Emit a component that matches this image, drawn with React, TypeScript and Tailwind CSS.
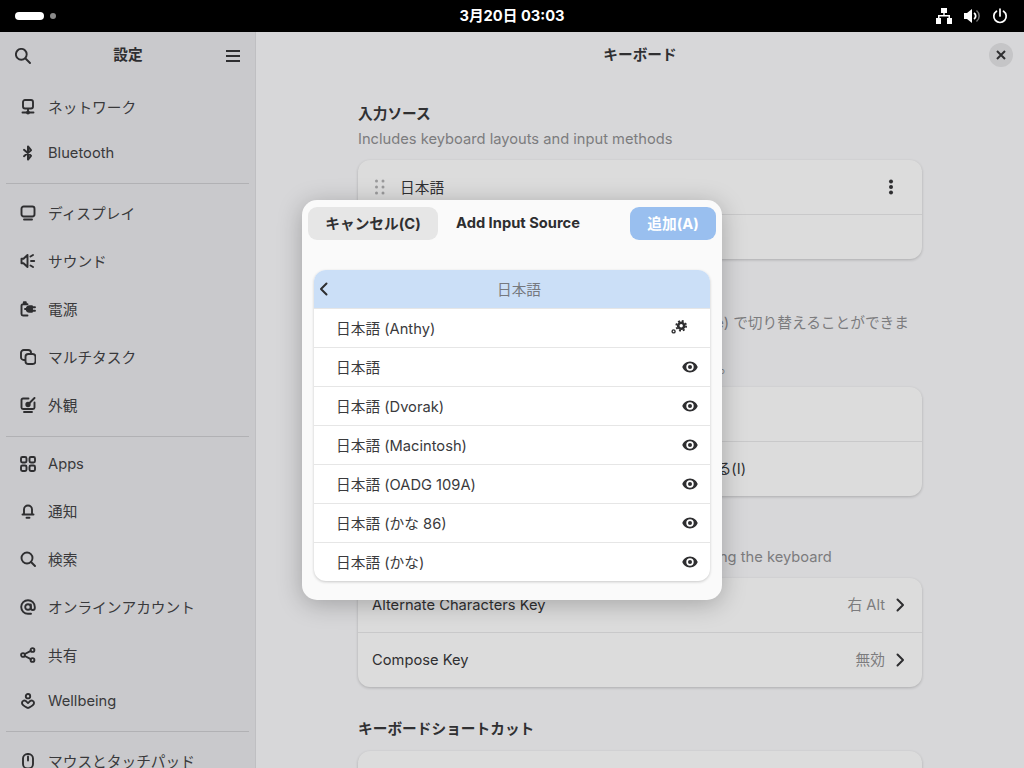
import { ReactNode } from 'react';

const FONT = { fontFamily: 'Inter, "Noto Sans CJK JP", sans-serif' };

function Ico({ children, size = 16, className = '' }: { children: ReactNode; size?: number; className?: string }) {
    return (
        <svg width={size} height={size} viewBox="0 0 16 16" fill="none" stroke="currentColor" strokeWidth="1.9" strokeLinecap="round" strokeLinejoin="round" className={className}>
            {children}
        </svg>
    );
}

const icons: Record<string, ReactNode> = {
    network: <><rect x="3" y="1" width="10" height="8.5" rx="2" /><path d="M8 10v4M2.5 13.5h11" /><circle cx="8" cy="13.5" r="1" fill="currentColor" /></>,
    bluetooth: <path d="M4 4.8 11 10.8 8 14.5V1.5l3 3.7-7 6" strokeWidth="2" />,
    display: <><rect x="1.5" y="1.5" width="13" height="10" rx="2.2" /><path d="M4 14.5h8" /></>,
    sound: <><path d="M1.5 5.8h2L7.5 2v12L3.5 10.2h-2z" /><path d="M10.5 3.5l2.5-1.5M11 8h3.2M10.5 12.5l2.5 1.5" /></>,
    power: <><path d="M7.5 3.2H3A1.5 1.5 0 0 0 1.5 4.7v8.3A1.5 1.5 0 0 0 3 14.5h4.5M3.8 3V1.2h2V3" /><path d="M9.5 5.2H12v5.6H9.5a2.8 2.8 0 0 1 0-5.6z" fill="currentColor" /><path d="M12 6.3h3M12 9.7h3M5 8h1.5" /></>,
    multitask: <><rect x="1" y="1" width="10" height="10" rx="2.8" /><rect x="5.5" y="5" width="10" height="10" rx="2.8" fill="#c9c9cc" /></>,
    appearance: <><path d="M8.5 1.5H3A1.5 1.5 0 0 0 1.5 3v7.5A1.5 1.5 0 0 0 3 12h10a1.5 1.5 0 0 0 1.5-1.5V5.5" /><path d="M4 15h8" /><path d="M14.5 1 9.5 6" /><circle cx="8" cy="7.5" r="1.7" fill="currentColor" /></>,
    apps: <><rect x="1" y="1" width="5.5" height="5.5" rx="1.4" /><rect x="9.5" y="1" width="5.5" height="5.5" rx="1.4" /><rect x="1" y="9.5" width="5.5" height="5.5" rx="1.4" /><rect x="9.5" y="9.5" width="5.5" height="5.5" rx="1.4" /></>,
    bell: <><path d="M4 11V6.5a4 4 0 0 1 8 0V11" /><path d="M2.5 11.5h11" /><path d="M6.5 14.8h3" /></>,
    search: <><circle cx="7" cy="7" r="5.5" /><path d="M11 11l4 4" /></>,
    at: <><circle cx="8" cy="8" r="2.8" /><path d="M10.8 5.5V9a2 2 0 0 0 4 0V8A6.8 6.8 0 1 0 8 14.8h3" /></>,
    share: <><circle cx="12.5" cy="3" r="1.9" /><circle cx="3" cy="8" r="1.9" /><circle cx="12.5" cy="13" r="1.9" /><path d="M4.8 7 10.8 3.9M4.8 9l6 3.1" /></>,
    wellbeing: <><circle cx="8" cy="3.2" r="2.2" /><path d="M8 15c-2-1-6-2.4-6-5a2.4 2.4 0 0 1 4.4-1.4L8 10l1.6-1.4A2.4 2.4 0 0 1 14 10c0 2.6-4 4-6 5z" /></>,
    mouse: <><rect x="3" y="1" width="10" height="14.5" rx="4.5" /><path d="M8 3.5v4" /></>,
};

type Item = { icon: string; label: string; h: string; latin?: boolean };

const groups: { cls: string; items: Item[] }[] = [
    {
        cls: '',
        items: [
            { icon: 'network', label: 'ネットワーク', h: 'h-[48px]' },
            { icon: 'bluetooth', label: 'Bluetooth', h: 'h-[44px]', latin: true },
        ],
    },
    {
        cls: 'border-t border-[#b1b1b4] mx-[6px] mt-[7px] pt-[6px]',
        items: [
            { icon: 'display', label: 'ディスプレイ', h: 'h-[48px]' },
            { icon: 'sound', label: 'サウンド', h: 'h-[48px]' },
            { icon: 'power', label: '電源', h: 'h-[48px]' },
            { icon: 'multitask', label: 'マルチタスク', h: 'h-[48px]' },
            { icon: 'appearance', label: '外観', h: 'h-[48px]' },
        ],
    },
    {
        cls: 'border-t border-[#b1b1b4] mx-[6px] mt-[6px] pt-[5px]',
        items: [
            { icon: 'apps', label: 'Apps', h: 'h-[46px]', latin: true },
            { icon: 'bell', label: '通知', h: 'h-[48px]' },
            { icon: 'search', label: '検索', h: 'h-[48px]' },
            { icon: 'at', label: 'オンラインアカウント', h: 'h-[48px]' },
            { icon: 'share', label: '共有', h: 'h-[48px]' },
            { icon: 'wellbeing', label: 'Wellbeing', h: 'h-[44px]', latin: true },
        ],
    },
    {
        cls: 'border-t border-[#b1b1b4] mx-[6px] mt-[7px] pt-[6px]',
        items: [{ icon: 'mouse', label: 'マウスとタッチパッド', h: 'h-[48px]' }],
    },
];

const sources = ['日本語 (Anthy)', '日本語', '日本語 (Dvorak)', '日本語 (Macintosh)', '日本語 (OADG 109A)', '日本語 (かな 86)', '日本語 (かな)'];

function Chevron() {
    return (
        <Ico className="text-[#2e2e30] ml-[7px]">
            <path d="M5.5 2.5 11 8l-5.5 5.5" strokeWidth="2" />
        </Ico>
    );
}

function Sidebar() {
    return (
        <div className="w-[256px] shrink-0 bg-[#c9c9cc] border-r border-[#bfbfc2] flex flex-col overflow-hidden text-[#39393b]">
            <div className="h-[47px] shrink-0 flex items-center justify-between pl-[15px] pr-[14px] text-[#2e2e30]">
                <Ico><circle cx="6.3" cy="6.3" r="5.4" /><path d="M10.5 10.5l4.5 4.5" /></Ico>
                <span className="font-bold text-[14.7px]">設定</span>
                <svg width="16" height="16" viewBox="0 0 16 16" className="fill-current">
                    <rect x="1" y="2" width="14" height="2" /><rect x="1" y="7" width="14" height="2" /><rect x="1" y="12" width="14" height="2" />
                </svg>
            </div>
            <div className="pt-[5px]">
                {groups.map((group, i) => (
                    <div key={i} className={group.cls}>
                        {group.items.map(item => (
                            <div key={item.label} className={`${item.h} flex items-center text-[14.7px] ${i > 0 ? 'pl-[14px]' : 'pl-[20px]'}`}>
                                <Ico className="text-[#2e2e30] -mt-[2px]">{icons[item.icon]}</Ico>
                                <span className={`ml-[12px] whitespace-nowrap ${item.latin ? '-mt-[2px]' : ''}`}>{item.label}</span>
                            </div>
                        ))}
                    </div>
                ))}
            </div>
        </div>
    );
}

function Keyboard() {
    return (
        <div className="flex-1 relative bg-[#d7d7d9] overflow-hidden text-[#303032]">
            <div className="h-[47px] flex items-center justify-center relative">
                <span className="font-bold text-[14.7px]">キーボード</span>
                <div className="absolute right-[11px] top-[11px] w-[24px] h-[24px] rounded-full bg-[#c5c5c7] flex items-center justify-center">
                    <svg width="10" height="10" viewBox="0 0 10 10" stroke="#2e2e30" strokeWidth="2"><path d="M1 1l8 8M9 1 1 9" /></svg>
                </div>
            </div>

            <div className="w-[564px] ml-[102px] text-[14.7px]">
                <h2 className="font-bold mt-[24px] leading-[22px]">入力ソース</h2>
                <p className="text-[#7c7c7e] leading-[22px] mt-[3px] whitespace-nowrap">Includes keyboard layouts and input methods</p>
                <div className="mt-[10px] rounded-[12px] bg-[#dcdcdc] shadow-[0_1px_3px_rgba(0,0,0,0.2)] overflow-hidden">
                    <div className="h-[55px] flex items-center border-b border-[#c9c9ca] pl-[16px] pr-[23px]">
                        <svg width="12" height="16" viewBox="0 0 12 16" className="fill-[#9a9a9b]">
                            <circle cx="2.5" cy="2" r="1.5" /><circle cx="9" cy="2" r="1.5" /><circle cx="2.5" cy="8" r="1.5" /><circle cx="9" cy="8" r="1.5" /><circle cx="2.5" cy="14" r="1.5" /><circle cx="9" cy="14" r="1.5" />
                        </svg>
                        <span className="ml-[14px] mt-[3px]">日本語</span>
                        <svg width="16" height="16" viewBox="0 0 16 16" className="ml-auto fill-[#2e2e30]">
                            <circle cx="8" cy="2.5" r="2" /><circle cx="8" cy="8" r="2" /><circle cx="8" cy="13.5" r="2" />
                        </svg>
                    </div>
                    <div className="h-[44px]" />
                </div>

                <h2 className="font-bold mt-[27px] leading-[22px]">入力ソースの切り替え</h2>
                <div className="text-[#7c7c7e] leading-[22px] mt-[4px]">
                    <p className="text-right pr-[13px] whitespace-nowrap">(または Shift+Space) で切り替えることができま</p>
                    <p className="h-[22px]" />
                    <p className="pl-[348px]">す。</p>
                </div>
                <div className="mt-[9px] rounded-[12px] bg-[#dcdcdc] shadow-[0_1px_3px_rgba(0,0,0,0.2)] overflow-hidden">
                    <div className="h-[55px] border-b border-[#c9c9ca]" />
                    <div className="h-[54px] flex items-center justify-end pr-[176px] whitespace-nowrap">各ウィンドウごとに異なる入力ソースに切り替える(I)</div>
                </div>

                <h2 className="font-bold mt-[25px] leading-[22px]">特殊文字の入力</h2>
                <p className="text-[#7c7c7e] leading-[22px] mt-[3px] whitespace-nowrap">Methods for entering symbols and letter variants using the keyboard</p>
                <div className="mt-[10px] rounded-[12px] bg-[#dcdcdc] shadow-[0_1px_3px_rgba(0,0,0,0.2)] overflow-hidden">
                    <div className="h-[55px] flex items-center border-b border-[#c9c9ca] pl-[14px] pr-[14px]">
                        <span className="mt-[1px]">Alternate Characters Key</span>
                        <span className="ml-auto mt-[1px] text-[#7c7c7e]">右 Alt</span>
                        <Chevron />
                    </div>
                    <div className="h-[54px] flex items-center pl-[14px] pr-[14px]">
                        <span className="mt-[1px]">Compose Key</span>
                        <span className="ml-auto mt-[1px] text-[#7c7c7e]">無効</span>
                        <Chevron />
                    </div>
                </div>

                <h2 className="font-bold mt-[31px] leading-[22px]">キーボードショートカット</h2>
                <div className="mt-[11px] h-[54px] rounded-[12px] bg-[#dcdcdc] shadow-[0_1px_3px_rgba(0,0,0,0.2)]" />
            </div>

            <div className="absolute left-[46px] top-[168px] w-[420px] h-[400px] rounded-[15px] bg-[#fafafa] shadow-[0_4px_24px_rgba(0,0,0,0.25)] p-[6px] pt-[7px]">
                <div className="flex items-center h-[33px] font-bold text-[14.7px]">
                    <div className="w-[130px] h-[33px] rounded-[9px] bg-[#e6e6e6] flex items-center justify-center text-[#303032]">
                        <span className="mt-[2px]">キャンセル(C)</span>
                    </div>
                    <span className="ml-[18px] text-[#2e2e30]">Add Input Source</span>
                    <div className="ml-auto w-[86px] h-[33px] rounded-[9px] bg-[#99bfef] flex items-center justify-center text-white">
                        <span className="mt-[2px]">追加(A)</span>
                    </div>
                </div>
                <div className="mt-[30px] mx-[6px] w-[396px] rounded-[12px] bg-white shadow-[0_1px_3px_rgba(0,0,0,0.2)] overflow-hidden text-[14.7px] text-[#3a3a3c]">
                    <div className="h-[38px] bg-[#cbdff7] relative flex items-center justify-center text-[#76797f]">
                        <Ico className="absolute left-[2px] text-[#2e2e30]"><path d="M10.5 2.5 5 8l5.5 5.5" strokeWidth="2" /></Ico>
                        <span className="ml-[14px] mt-[2px]">日本語</span>
                    </div>
                    {sources.map((name, i) => (
                        <div key={name} className="h-[39px] border-t border-[#e6e6e6] flex items-center pl-[22px] pr-[12px]">
                            <span className="mt-[2px]">{name}</span>
                            {i === 0 ? (
                                <svg width="16" height="16" viewBox="0 0 16 16" className="ml-auto mr-[11px] -mt-[2px] text-[#2e2e30]" fill="none" stroke="currentColor">
                                    <circle cx="10.2" cy="6.8" r="3" strokeWidth="2.6" />
                                    <circle cx="10.2" cy="6.8" r="4.9" strokeWidth="1.8" strokeDasharray="2 1.85" />
                                    <circle cx="2.6" cy="12.4" r="1.5" strokeWidth="1.4" />
                                </svg>
                            ) : (
                                <svg width="16" height="16" viewBox="0 0 16 16" className="ml-auto text-[#2e2e30]" fill="currentColor">
                                    <path fillRule="evenodd" d="M8 2.5C4.2 2.5 1.2 5.3 0.3 8c.9 2.7 3.9 5.5 7.7 5.5s6.8-2.8 7.7-5.5C14.8 5.3 11.8 2.5 8 2.5zM8 4.3A3.7 3.7 0 1 1 8 11.7 3.7 3.7 0 0 1 8 4.3z" />
                                    <circle cx="8" cy="8" r="2" />
                                </svg>
                            )}
                        </div>
                    ))}
                </div>
            </div>
        </div>
    );
}

export default function App() {
    return (
        <div className="w-[1024px] h-[768px] overflow-hidden flex flex-col" style={FONT}>
            <div className="h-[32px] shrink-0 bg-black flex items-center relative text-white">
                <div className="w-[29px] h-[8px] rounded-full bg-white ml-[15px]" />
                <div className="w-[6px] h-[6px] rounded-full bg-[#8a8a8a] ml-[6px]" />
                <span className="absolute left-0 right-0 text-center font-bold text-[14.7px] leading-[32px]">3月20日 03:03</span>
                <div className="ml-auto flex items-center gap-[12px] pr-[16px]">
                    <svg width="16" height="16" viewBox="0 0 16 16" className="fill-white">
                        <path d="M5 0h6v5H8.7v2H14v3h2v6h-5v-6h1.5V8.5h-9V10H5v6H0v-6h2V7h5.3V5H5z" />
                    </svg>
                    <svg width="16" height="16" viewBox="0 0 16 16" className="fill-white">
                        <path d="M0 5h3L8 1v14L3 11H0z" />
                        <path d="M10 5a3.5 3.5 0 0 1 0 6" fill="none" stroke="white" strokeWidth="1.8" />
                        <path d="M12.5 2.5a7 7 0 0 1 0 11" fill="none" stroke="#777" strokeWidth="1.5" />
                    </svg>
                    <svg width="16" height="16" viewBox="0 0 16 16" fill="none" stroke="white" strokeWidth="1.7" strokeLinecap="round">
                        <path d="M8 1v7" />
                        <path d="M4.5 3.2a6.2 6.2 0 1 0 7 0" />
                    </svg>
                </div>
            </div>
            <div className="flex-1 flex min-h-0">
                <Sidebar />
                <Keyboard />
            </div>
        </div>
    );
}
